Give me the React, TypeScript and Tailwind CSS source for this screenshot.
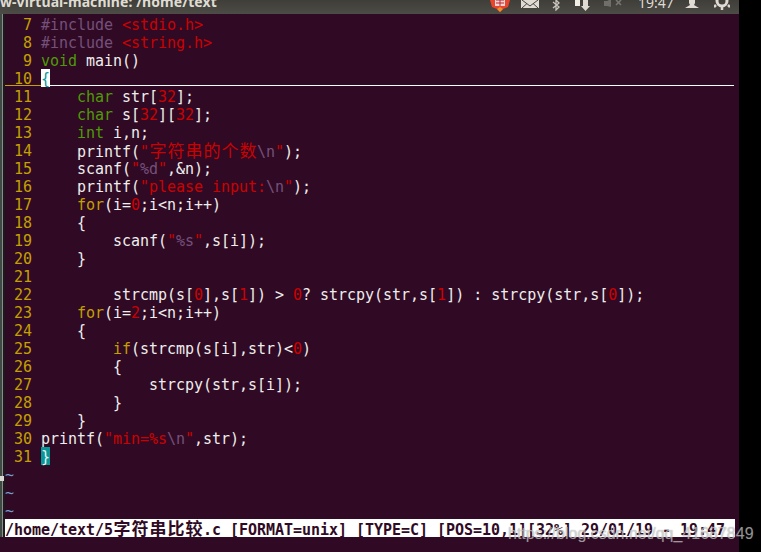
const mono = "font-['DejaVu_Sans_Mono','Noto_Sans_CJK_SC',monospace]";

type Seg = [string, string?];
const G = "text-[#4e9a06]";
const Y = "text-[#c4a000]";
const R = "text-[#cc0000]";
const P = "text-[#75507b]";

function Cjk({ text }: { text: string }) {
  return (
    <>
      {Array.from(text).map((c, i) => (
        <span key={i} className="inline-block w-[18px] text-center text-[17px] leading-[18px] font-['Noto_Sans_CJK_SC',sans-serif]">
          {c}
        </span>
      ))}
    </>
  );
}

const lines: [number, Seg[]][] = [
  [7, [["#include ", P], ["<stdio.h>", R]]],
  [8, [["#include ", P], ["<string.h>", R]]],
  [9, [["void", G], [" main()"]]],
  [10, []],
  [11, [["    "], ["char", G], [" str["], ["32", R], ["];"]]],
  [12, [["    "], ["char", G], [" s["], ["32", R], ["]["], ["32", R], ["];"]]],
  [13, [["    "], ["int", G], [" i,n;"]]],
  [14, [["    printf("], ['"', R], ["@字符串的个数", R], ["\\n", P], ['"', R], [");"]]],
  [15, [["    scanf("], ['"', R], ["%d", P], ['"', R], [",&n);"]]],
  [16, [["    printf("], ['"please input:', R], ["\\n", P], ['"', R], [");"]]],
  [17, [["    "], ["for", Y], ["(i="], ["0", R], [";i<n;i++)"]]],
  [18, [["    {"]]],
  [19, [["        scanf("], ['"', R], ["%s", P], ['"', R], [",s[i]);"]]],
  [20, [["    }"]]],
  [21, []],
  [22, [["        strcmp(s["], ["0", R], ["],s["], ["1", R], ["]) > "], ["0", R], ["? strcpy(str,s["], ["1", R], ["]) : strcpy(str,s["], ["0", R], ["]);"]]],
  [23, [["    "], ["for", Y], ["(i="], ["2", R], [";i<n;i++)"]]],
  [24, [["    {"]]],
  [25, [["        "], ["if", Y], ["(strcmp(s[i],str)<"], ["0", R], [")"]]],
  [26, [["        {"]]],
  [27, [["            strcpy(str,s[i]);"]]],
  [28, [["        }"]]],
  [29, [["    }"]]],
  [30, [["printf("], ['"min=%s', R], ["\\n", P], ['"', R], [",str);"]]],
  [31, []],
];

function Row({ n, segs }: { n: number; segs: Seg[] }) {
  return (
    <div className="relative flex h-[18px] whitespace-pre leading-[20px]">
      <span className="w-[36px] shrink-0 text-[#c4a000]">{String(n).padStart(3, " ")} </span>
      {n === 10 && <span className="inline-block h-[18px] w-[9px] bg-white text-[#06989a]">{"{"}</span>}
      {n === 31 && <span className="inline-block h-[18px] w-[9px] bg-[#06989a] text-[#eeeeec]">{"}"}</span>}
      <span>
        {segs.map(([t, c], i) =>
          t.startsWith("@") ? (
            <span key={i} className={c}><Cjk text={t.slice(1)} /></span>
          ) : (
            <span key={i} className={c}>{t}</span>
          )
        )}
      </span>
      {n === 10 && (
        <>
          <div className="absolute left-0 top-[16px] h-px w-[36px] bg-[#c4a000]" />
          <div className="absolute left-[45px] top-[16px] h-px w-[684px] bg-white" />
        </>
      )}
    </div>
  );
}

function TopIcons() {
  return (
    <div className="flex h-[14px] items-start">
      <svg className="ml-[489px] -mt-[2px] shrink-0" width="22" height="16" viewBox="0 0 22 16">
        <path d="M1 2 H21 L19 9 L14 11 L11 14 L8 11 L3 9Z" fill="#e8452c" />
        <path d="M8 11 L11 14 L14 11 L11 9Z" fill="#f0902a" />
        <rect x="6" y="0" width="10" height="8" fill="#e8d8d8" />
        <path d="M7 2h8M7 5h8M11 0v8" stroke="#c8202c" strokeWidth="1" />
      </svg>
      <svg className="ml-[10px] shrink-0" width="18" height="10" viewBox="0 0 18 10">
        <path d="M0 0 L9 0 L18 0 V8 H0Z" fill="#dfdbd2" />
        <path d="M1 0 L9 6 L17 0 M1 8 L6 3.5 M17 8 L12 3.5" stroke="#45443f" strokeWidth="1" fill="none" />
      </svg>
      <svg className="ml-[12px] shrink-0" width="10" height="11" viewBox="0 0 10 11">
        <path d="M2 2 L8 7 L5 10 V0 L8 3 L2 8" stroke="#c8c5bc" strokeWidth="1.3" fill="none" />
      </svg>
      <svg className="ml-[13px] shrink-0" width="16" height="12" viewBox="0 0 16 12">
        <rect x="1" y="0" width="5" height="6" fill="#f0ede4" />
        <path d="M9 0 h5 v6 h2 l-4.5 5 L7 6 h2Z" fill="#dfdbd2" />
      </svg>
      <svg className="ml-[14px] shrink-0" width="18" height="8" viewBox="0 0 18 8">
        <path d="M0 1 h3 L7 -1 V7 L3 6 H0Z" fill="#6f6e69" />
        <path d="M12 0 L17 5 M17 0 L12 5" stroke="#77766f" strokeWidth="1.6" />
      </svg>
      <span className="ml-[16px] -mt-[7px] w-[35px] shrink-0 font-['Noto_Sans',sans-serif] text-[14px] leading-[19px] text-[#dfdbd2]">19:47</span>
      <svg className="ml-[12px] shrink-0" width="14" height="8" viewBox="0 0 14 8">
        <path d="M4 0 H10 V3 L9 5 L14 8 H0 L5 5 L4 3Z" fill="#dfdbd2" />
      </svg>
      <svg className="ml-[15px] -mt-[3px] shrink-0" width="16" height="14" viewBox="0 0 16 14">
        <circle cx="8" cy="4" r="5" fill="none" stroke="#dfdbd2" strokeWidth="3" />
        <path d="M8 9 v4 M2 8 l-2 2 M14 8 l2 2" stroke="#dfdbd2" strokeWidth="2.5" />
      </svg>
    </div>
  );
}

export default function App() {
  return (
    <div className="relative h-[552px] w-[761px] overflow-hidden bg-black">
      <div className="relative h-[14px] w-[739px] overflow-hidden bg-gradient-to-b from-[#3f3e39] to-[#4c4b46]">
        <div className="absolute -top-[8px] left-0 whitespace-nowrap font-['Noto_Sans',sans-serif] text-[14px] font-bold tracking-[0.08px] leading-[19px] text-[#dfdbd2]">
          w-virtual-machine: /home/text
        </div>
        <TopIcons />
      </div>
      <div className="flex h-[538px] w-[739px] bg-[#300a24]">
        <div className="relative mb-[15px] w-[5px] shrink-0 bg-[linear-gradient(90deg,#3f4a44_0,#3f4a44_2px,#8a8d88_2px,#8a8d88_3px,#1c1a1c_3px)]">
          <div className="absolute left-0 top-[462px] h-[5px] w-[4px] bg-[#d8d8d4]" />
        </div>
        <div className={`flex-1 pt-[1px] text-[15px] tracking-[-0.03px] text-[#eeeeec] ${mono}`}>
          {lines.map(([n, s]) => (
            <Row key={n} n={n} segs={s} />
          ))}
          <div className="h-[18px] leading-[20px] text-[#729fcf]">~</div>
          <div className="h-[18px] leading-[20px] text-[#729fcf]">~</div>
          <div className="h-[18px] leading-[20px] text-[#729fcf]">~</div>
          <div className="mr-[4px] h-[18px] whitespace-pre bg-white font-bold leading-[20px] text-[#300a24]">
            /home/text/5<Cjk text="字符串比较" />.c [FORMAT=unix] [TYPE=C] [POS=10,1][32%] 29/01/19 - 19:47
          </div>
        </div>
      </div>
      <div className="absolute left-[508px] top-[525px] whitespace-nowrap font-['Liberation_Sans',sans-serif] text-[16px] leading-[18px] text-white/50 [text-shadow:0_0_1px_rgba(80,80,80,0.6)]">
        https://blog.csdn.net/qq_41687849
      </div>
    </div>
  );
}
